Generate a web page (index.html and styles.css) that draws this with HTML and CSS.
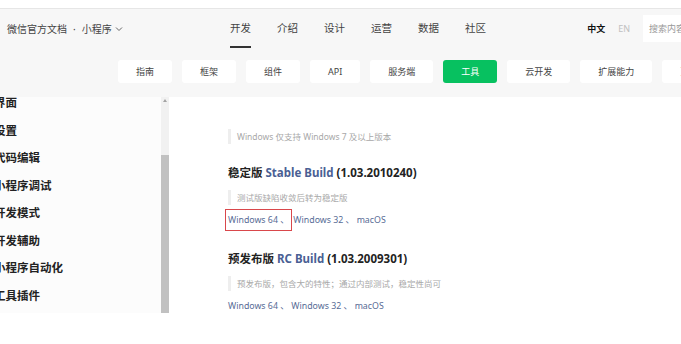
FILE: index.html
```html
<!DOCTYPE html>
<html lang="zh-CN">
<head>
  <meta charset="UTF-8" />
  <title>开发者工具下载</title>
  <link rel="stylesheet" href="styles.css">
</head>
<body>
  <div class="page">
    <div class="topline"></div>
    <div class="header">
      <div class="brand">微信官方文档 <span class="dot">·</span> 小程序
        <svg class="caret" width="8" height="6" viewBox="0 0 8 6"><path d="M1 1.5 L4 4.5 L7 1.5" fill="none" stroke="#666" stroke-width="1"/></svg>
      </div>
      <nav class="nav">
        <a class="active">开发</a>
        <a>介绍</a>
        <a>设计</a>
        <a>运营</a>
        <a>数据</a>
        <a>社区</a>
      </nav>
      <div class="lang"><b>中文</b><span>EN</span></div>
      <div class="search">搜索内容</div>
    </div>
    <div class="subnav">
      <a class="tab">指南</a>
      <a class="tab">框架</a>
      <a class="tab">组件</a>
      <a class="tab">API</a>
      <a class="tab">服务端</a>
      <a class="tab current">工具</a>
      <a class="tab">云开发</a>
      <a class="tab">扩展能力</a>
      <a class="tab">更多</a>
    </div>
    <div class="main">
      <div class="sidebar">
        <ul class="menu">
          <li>界面</li>
          <li>设置</li>
          <li>代码编辑</li>
          <li>小程序调试</li>
          <li>开发模式</li>
          <li>开发辅助</li>
          <li>小程序自动化</li>
          <li>工具插件</li>
        </ul>
      </div>
      <div class="scrollbar">
        <div class="arrow"></div>
        <div class="thumb"></div>
      </div>
      <div class="content">
        <blockquote class="q1">Windows 仅支持 Windows 7 及以上版本</blockquote>

        <h2>稳定版 <span class="hl">Stable Build</span> (1.03.2010240)</h2>
        <blockquote>测试版缺陷收敛后转为稳定版</blockquote>
        <p class="links"><span class="marked"><a>Windows 64</a> 、</span> <a>Windows 32</a> 、 <a>macOS</a></p>

        <h2>预发布版 <span class="hl">RC Build</span> (1.03.2009301)</h2>
        <blockquote>预发布版，包含大的特性；通过内部测试，稳定性尚可</blockquote>
        <p class="links"><a>Windows 64</a> 、 <a>Windows 32</a> 、 <a>macOS</a></p>
      </div>
    </div>
  </div>
</body>
</html>
```

FILE: styles.css
```css
body {
  margin: 0;
  background: #fff;
  font-family: "Noto Sans", "Noto Sans CJK SC", sans-serif;
  color: #353535;
  overflow: hidden;
}
.page {
  width: 681px;
  height: 313px;
  overflow: hidden;
}
.topline {
  height: 8px;
  background: #fff;
  border-bottom: 1px solid #e6e6e6;
}
.header {
  height: 39px;
  background: #f7f7f7;
  display: flex;
  align-items: center;
  white-space: nowrap;
}
.brand {
  width: 223px;
  padding-left: 7px;
  font-size: 10px;
  color: #444;
  display: flex;
  align-items: center;
}
.brand .dot {
  margin: 0 6px;
}
.brand .caret {
  margin-left: 3px;
}
.nav {
  display: flex;
  gap: 26px;
  height: 100%;
}
.nav a {
  font-size: 10.5px;
  color: #444;
  line-height: 39px;
  position: relative;
}
.nav a.active::after {
  content: "";
  position: absolute;
  left: 0;
  right: 0;
  bottom: 0;
  height: 2px;
  background: #333;
}
.lang {
  margin-left: auto;
  display: flex;
  gap: 13px;
  font-size: 9px;
  margin-right: 13px;
}
.lang b {
  color: #111;
}
.lang span {
  color: #c0c0c0;
}
.search {
  width: 60px;
  flex-shrink: 0;
  height: 27px;
  line-height: 27px;
  background: #fff;
  padding-left: 6px;
  font-size: 9px;
  color: #999;
  margin-right: -28px;
}
.subnav {
  height: 49px;
  background: #f7f7f7;
  display: flex;
  align-items: flex-start;
  gap: 10px;
  padding: 12px 0 0 118px;
  box-sizing: border-box;
  white-space: nowrap;
}
.tab {
  flex-shrink: 0;
  height: 23px;
  line-height: 23px;
  padding: 0 18px;
  background: #fff;
  border-radius: 3px;
  font-size: 9px;
  color: #444;
}
.tab.current {
  background: #07c160;
  color: #fff;
}
.main {
  display: flex;
  height: 216px;
}
.sidebar {
  width: 161px;
  flex-shrink: 0;
  overflow: hidden;
  background: #fcfcfc;
}
.menu {
  list-style: none;
  margin: -8px 0 0 -6px;
  padding: 0;
}
.menu li {
  line-height: 27.5px;
  font-size: 11.5px;
  font-weight: bold;
  color: #222;
  white-space: nowrap;
}
.scrollbar {
  width: 8px;
  flex-shrink: 0;
  background: #f1f1f1;
  display: flex;
  flex-direction: column;
  align-items: center;
}
.arrow {
  margin-top: 2px;
  width: 0;
  height: 0;
  border-left: 2px solid transparent;
  border-right: 2px solid transparent;
  border-bottom: 3px solid #a3a3a3;
}
.thumb {
  margin-top: 53px;
  width: 8px;
  flex: 1;
  background: #c1c1c1;
}
.content {
  flex: 1;
  padding: 32px 0 0 59px;
  background: #fff;
}
blockquote {
  margin: 0;
  border-left: 3px solid #eee;
  padding-left: 6px;
  font-size: 8.5px;
  line-height: 15px;
  color: #a8a8a8;
  white-space: nowrap;
}
h2 {
  margin: 20px 0 8px;
  font-size: 11.5px;
  line-height: 18px;
  color: #222;
  white-space: nowrap;
}
h2 .hl {
  color: #4a5f94;
}
.links {
  margin: 5px 0 0;
  font-size: 8.8px;
  line-height: 20px;
  color: #576b95;
  white-space: nowrap;
}
.links a {
  color: #576b95;
}
.marked {
  outline: 1px solid #d9474b;
  outline-offset: 0;
  padding: 4px 2px 4px 2px;
  margin-left: -2px;
}
```
